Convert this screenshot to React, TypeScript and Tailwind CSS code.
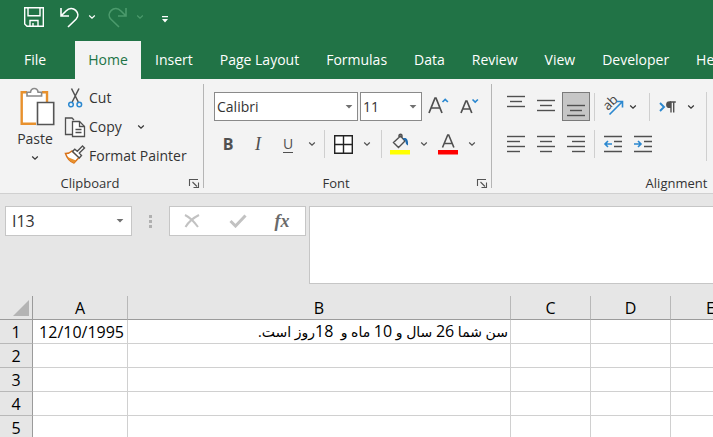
import type { ReactNode } from 'react';
import { clsx } from 'clsx';

const TABS = ['Insert', 'Page Layout', 'Formulas', 'Data', 'Review', 'View', 'Developer', 'Help'];

const COLUMNS = [
  { name: 'A', width: 'w-[95px]' },
  { name: 'B', width: 'w-[383px]' },
  { name: 'C', width: 'w-20' },
  { name: 'D', width: 'w-20' },
  { name: 'E', width: 'w-20' },
];

const ROWS = [1, 2, 3, 4, 5];

const CELLS: Record<string, { text: string; rtl?: boolean }> = {
  A1: { text: '12/10/1995' },
  B1: { text: 'سن شما 26 سال و 10 ماه و  18روز است.', rtl: true },
};

function Chevron({ className }: { className?: string }) {
  return (
    <svg viewBox="0 0 8 6" className={clsx('h-[6px] w-2 shrink-0', className)} fill="none" stroke="currentColor" strokeWidth="1.2">
      <path d="M1.200 1.500 4 4.200 6.800 1.500" />
    </svg>
  );
}

function Caret({ className }: { className?: string }) {
  return (
    <svg viewBox="0 0 8 4" className={clsx('h-1 w-2 shrink-0 text-[#707070]', className)} fill="currentColor">
      <path d="M.6 0h6.800L4 3.600z" />
    </svg>
  );
}

interface ToolButtonProps {
  label: string;
  className?: string;
  active?: boolean;
  children: ReactNode;
}

function ToolButton({ label, className, active, children }: ToolButtonProps) {
  return (
    <button
      type="button"
      aria-label={label}
      className={clsx(
        'flex shrink-0 items-center justify-center',
        active && 'border border-[#7a7a7a] bg-[#c6c6c6]',
        className,
      )}
    >
      {children}
    </button>
  );
}

function Divider() {
  return <div className="h-7 w-px shrink-0 bg-[#cfcfcf]" />;
}

function LinesIcon({ lines }: { lines: [number, number, number][] }) {
  return (
    <svg viewBox="0 0 20 28" className="h-7 w-5" stroke="#505050" strokeWidth="1.4">
      {lines.map(([x1, x2, y]) => (
        <path key={y} d={`M${x1} ${y}H${x2}`} />
      ))}
    </svg>
  );
}

function GroupFooter({ title, launcher }: { title: string; launcher?: boolean }) {
  return (
    <div className="flex h-5 items-center pr-[3px]">
      <span className={clsx('flex-1 text-center text-[13px] text-[#333]', launcher && 'pr-2')}>{title}</span>
      {launcher && (
        <button type="button" aria-label={`${title} settings`} className="h-3 w-3">
          <svg viewBox="0 0 12 12" className="h-3 w-3" fill="none" stroke="#555" strokeWidth="1.1">
            <path d="M1.500 9V2.500H10M4.500 5 9 9.500M10.500 5.500V10.500H5.500" />
          </svg>
        </button>
      )}
    </div>
  );
}

function TitleBar() {
  return (
    <div className="flex h-[41px] items-center pb-[7px] pl-6 text-white">
      <button type="button" aria-label="Save">
        <svg viewBox="0 0 20 20" className="h-5 w-5" fill="none" stroke="currentColor" strokeWidth="1.4">
          <path d="M.7.7h18.600v18.600H3L.7 17zM4 .7v8h12v-8M6 19v-5.500h8V19M9 19v-3" />
        </svg>
      </button>
      <button type="button" aria-label="Undo" className="ml-4 flex items-center gap-2">
        <svg viewBox="0 0 20 21" className="h-[21px] w-5" fill="none" stroke="currentColor" strokeWidth="1.6">
          <path d="M1 1v8h8M1.500 8.500 6 4C9 1 13 .8 15.700 3.300c2.800 2.700 2.800 6.300.3 9L8 20" />
        </svg>
        <Chevron />
      </button>
      <button type="button" aria-label="Redo" className="ml-3 flex items-center gap-2 text-[#4b9a6c]">
        <svg viewBox="0 0 20 21" className="h-[21px] w-5" fill="none" stroke="currentColor" strokeWidth="1.6">
          <path d="M18 1v8h-8M17.500 8.500 13 4C10 1 6 .8 3.300 3.300.5 6 .5 9.600 3 12.300L11 20" />
        </svg>
        <Chevron />
      </button>
      <button type="button" aria-label="Customize Quick Access Toolbar" className="mt-1 ml-[18px]">
        <svg viewBox="0 0 6 7" className="h-[7px] w-[6px]" fill="currentColor">
          <path d="M0 0h6v1.200H0zM0 3h6L3 6.500z" />
        </svg>
      </button>
    </div>
  );
}

function TabBar() {
  return (
    <nav className="flex h-[38px] overflow-hidden text-sm text-white">
      <a href="#file" className="flex w-[75px] shrink-0 items-center pl-6">File</a>
      <a href="#home" className="flex w-[66px] shrink-0 items-center justify-center bg-[#f3f3f3] text-[#217346]">Home</a>
      <div className="flex gap-[27px] pl-3.5">
        {TABS.map((tab) => (
          <a key={tab} href={`#${tab}`} className="flex shrink-0 items-center whitespace-nowrap">{tab}</a>
        ))}
      </div>
    </nav>
  );
}

function ClipboardGroup() {
  return (
    <section className="flex w-[203px] shrink-0 flex-col">
      <div className="flex flex-1 pl-[14px]">
        <button type="button" className="flex w-[42px] flex-col items-center gap-0.5 pt-2">
          <svg viewBox="0 0 36 40" className="ml-1 h-10 w-9" fill="none">
            <path d="M3 6.500h24.500V37H3z" fill="#fff" />
            <path d="M8 5.300H2.700v31.500H17M23 5.300h5V15" stroke="#e8912d" strokeWidth="2.400" />
            <path d="M8 9V5.300h3.500c.3-2.500 1.700-3.800 3.800-3.800s3.500 1.300 3.800 3.800h3.500V9z" fill="#fff" stroke="#8a8a8a" strokeWidth="1.600" />
            <path d="M18.500 15.500h16.200V37.500H18.500z" fill="#fff" stroke="#555" strokeWidth="1.600" />
          </svg>
          <span className="text-sm leading-5">Paste</span>
          <Chevron className="mt-1" />
        </button>
        <div className="ml-2 flex flex-col pt-1">
          <button type="button" className="flex h-[29px] items-center gap-[3px]">
            <svg viewBox="0 0 22 22" className="h-[22px] w-[22px]" fill="none">
              <path d="M7.500 1.500 14.300 15M15 1.500 8.200 15" stroke="#505050" strokeWidth="1.500" />
              <circle cx="7" cy="17.500" r="2.300" stroke="#2b88d0" strokeWidth="1.500" />
              <circle cx="15.300" cy="17.500" r="2.300" stroke="#2b88d0" strokeWidth="1.500" />
            </svg>
            Cut
          </button>
          <button type="button" className="flex h-[29px] items-center gap-[3px]">
            <svg viewBox="0 0 22 22" className="h-[22px] w-[22px]" fill="none" stroke="#505050" strokeWidth="1.300">
              <path d="M8 18.500H1.500V2H8l2 2" />
              <path d="M8.500 5.500h7l5 5v10h-12z" fill="#fff" />
              <path d="M15.500 5.500v5h5M11.500 13.500h6M11.500 16.500h6" />
            </svg>
            Copy
            <Chevron className="ml-3" />
          </button>
          <button type="button" className="flex h-[29px] items-center gap-[3px] whitespace-nowrap">
            <svg viewBox="0 0 22 22" className="h-[22px] w-[22px]" fill="none">
              <path d="M1.500 8.500c3 0 5-1 6.500-2.500l7 6.500L10 18C5.500 16.500 3 13 1.500 8.500z" fill="#fff" stroke="#d9731a" strokeWidth="1.500" />
              <path d="M3.500 12 12 15.500l-2 2.500c-3-1-5-3-6.500-6z" fill="#e8912d" />
              <path d="m8.500 6.500 2.300-2.300 2.500 2L18.500 1l2 2-5.200 5.100 2.200 2.400-2.200 2.500z" fill="#fff" stroke="#505050" strokeWidth="1.400" />
            </svg>
            Format Painter
          </button>
        </div>
      </div>
      <GroupFooter title="Clipboard" launcher />
    </section>
  );
}

function FontGroup() {
  return (
    <section className="flex w-[287px] shrink-0 flex-col">
      <div className="flex flex-1 flex-col gap-[9px] pt-[13px] pl-[10px]">
        <div className="flex h-[29px] items-center">
          <div className="relative flex h-full items-center">
            <select aria-label="Font" className="h-full w-36 appearance-none border border-[#8a8a8a] bg-white pl-0.5">
              <option>Calibri</option>
            </select>
            <Caret className="pointer-events-none absolute right-[5px]" />
          </div>
          <div className="relative ml-0.5 flex h-full items-center">
            <select aria-label="Font size" className="h-full w-[62px] appearance-none border border-[#8a8a8a] bg-white pl-0.5">
              <option>11</option>
            </select>
            <Caret className="pointer-events-none absolute right-[5px]" />
          </div>
          <ToolButton label="Increase font size" className="ml-0.5 h-7 w-7">
            <svg viewBox="0 0 22 22" className="h-[22px] w-[22px]" fill="none">
              <path d="M2 17 8 2h1l6 15M4.200 12H12.800" stroke="#505050" strokeWidth="1.700" />
              <path d="m15.500 6 2.700-2.500L20.900 6" stroke="#2b88d0" strokeWidth="1.700" />
            </svg>
          </ToolButton>
          <ToolButton label="Decrease font size" className="ml-1 h-7 w-7">
            <svg viewBox="0 0 22 22" className="h-[22px] w-[22px]" fill="none">
              <path d="M2 17 6.900 5h1L12.800 17M3.900 13h7" stroke="#505050" strokeWidth="1.700" />
              <path d="m13.500 3.500 2.700 2.500 2.700-2.500" stroke="#2b88d0" strokeWidth="1.700" />
            </svg>
          </ToolButton>
        </div>
        <div className="flex h-7 items-center text-[#505050]">
          <ToolButton label="Bold" className="h-7 w-7"><span className="text-base font-bold">B</span></ToolButton>
          <ToolButton label="Italic" className="ml-0.5 h-7 w-7"><span className="font-['Liberation_Serif'] text-lg italic">I</span></ToolButton>
          <ToolButton label="Underline" className="ml-0.5 h-7 w-7"><span className="border-b border-[#505050] text-sm leading-4">U</span></ToolButton>
          <ToolButton label="Underline options" className="ml-0.5 h-7 w-4"><Chevron /></ToolButton>
          <div className="ml-1"><Divider /></div>
          <ToolButton label="Borders" className="ml-1 h-7 w-7">
            <svg viewBox="0 0 19 19" className="h-[19px] w-[19px]" fill="#fff" stroke="#222" strokeWidth="1.400">
              <path d="M.7.7h17.600v17.600H.7zM9.500.7v17.600M.7 9.500h17.600" />
            </svg>
          </ToolButton>
          <ToolButton label="Border options" className="ml-0.5 h-7 w-4"><Chevron /></ToolButton>
          <div className="ml-1.5"><Divider /></div>
          <ToolButton label="Fill color" className="ml-1 h-7 w-7">
            <svg viewBox="0 0 20 22" className="h-[22px] w-5" fill="none">
              <path d="M0 17h20v4.500H0z" fill="#ff0" />
              <path d="m3.500 9.500 7-6.500 4.500 5-6.500 6.500zM9 4.500V2.500c0-1.700 3-1.700 3 0V5" stroke="#505050" strokeWidth="1.400" />
              <path d="M12.500 5.500c4-1.500 6 1 5.500 7-2-.5-2.500-2.500-2.500-4.500z" fill="#1e6bb0" />
            </svg>
          </ToolButton>
          <ToolButton label="Fill color options" className="ml-0.5 h-7 w-4"><Chevron /></ToolButton>
          <ToolButton label="Font color" className="ml-0.5 h-7 w-7">
            <svg viewBox="0 0 20 22" className="h-[22px] w-5" fill="none">
              <path d="M0 17h20v4.500H0z" fill="red" />
              <path d="M4.500 14.500 9.700 2h1l5.200 12.500M6.500 10.500h7.400" stroke="#505050" strokeWidth="1.600" />
            </svg>
          </ToolButton>
          <ToolButton label="Font color options" className="ml-0.5 h-7 w-4"><Chevron /></ToolButton>
        </div>
      </div>
      <GroupFooter title="Font" launcher />
    </section>
  );
}

function AlignmentGroup() {
  return (
    <section className="flex w-[372px] shrink-0 flex-col">
      <div className="flex flex-1 pt-[13px] pl-[10px]">
        <div className="flex flex-col gap-[9px]">
          <div className="flex h-[29px] items-center gap-0.5">
            <ToolButton label="Top align" className="h-[29px] w-7">
              <LinesIcon lines={[[1, 19, 3.500], [4, 16, 8.500], [1, 19, 13.500]]} />
            </ToolButton>
            <ToolButton label="Middle align" className="h-[29px] w-7">
              <LinesIcon lines={[[1, 19, 7.500], [4, 16, 12.500], [1, 19, 17.500]]} />
            </ToolButton>
            <ToolButton label="Bottom align" active className="h-[29px] w-7">
              <LinesIcon lines={[[1, 19, 12.500], [4, 16, 17.500], [1, 19, 22.500]]} />
            </ToolButton>
            <div className="ml-0.5"><Divider /></div>
            <ToolButton label="Orientation" className="ml-0.5 h-7 w-7">
              <svg viewBox="0 0 28 28" className="h-7 w-7" fill="none">
                <text transform="translate(9 18) rotate(-45)" fontSize="13" fill="#444">ab</text>
                <path d="M10.500 21.500 23 9M17.500 8.500h6v6" stroke="#2b88d0" strokeWidth="1.600" />
              </svg>
            </ToolButton>
            <ToolButton label="Orientation options" className="h-7 w-2"><Chevron /></ToolButton>
            <div className="ml-2.5"><Divider /></div>
            <ToolButton label="Text direction" className="ml-0.5 h-7 w-7">
              <svg viewBox="0 0 20 20" className="h-5 w-5" fill="none">
                <path d="m2 6 4 4-4 4" stroke="#2b88d0" strokeWidth="1.900" />
                <path d="M13 5v10.500M15.700 5v10.500M17.800 5H12" stroke="#505050" strokeWidth="1.400" />
                <path d="M13 4.300h-1.500a3.400 3.400 0 0 0 0 6.800H13z" fill="#505050" />
              </svg>
            </ToolButton>
            <ToolButton label="Text direction options" className="h-7 w-3.5"><Chevron /></ToolButton>
          </div>
          <div className="flex h-7 items-center gap-0.5">
            <ToolButton label="Align left" className="h-7 w-7">
              <LinesIcon lines={[[1, 19, 6.500], [1, 14, 11.500], [1, 19, 16.500], [1, 14, 21.500]]} />
            </ToolButton>
            <ToolButton label="Center" className="h-7 w-7">
              <LinesIcon lines={[[1, 19, 6.500], [4, 16, 11.500], [1, 19, 16.500], [4, 16, 21.500]]} />
            </ToolButton>
            <ToolButton label="Align right" className="h-7 w-7">
              <LinesIcon lines={[[1, 19, 6.500], [6, 19, 11.500], [1, 19, 16.500], [6, 19, 21.500]]} />
            </ToolButton>
            <div className="ml-0.5"><Divider /></div>
            <ToolButton label="Decrease indent" className="ml-0.5 h-7 w-7">
              <svg viewBox="0 0 20 28" className="h-7 w-5" fill="none" stroke="#505050" strokeWidth="1.400">
                <path d="M1 6.500h18M11 11.500h8M11 16.500h8M1 21.500h18" />
                <path d="M9 14H2M5 11l-3 3 3 3" stroke="#2b88d0" strokeWidth="1.600" />
              </svg>
            </ToolButton>
            <ToolButton label="Increase indent" className="h-7 w-7">
              <svg viewBox="0 0 20 28" className="h-7 w-5" fill="none" stroke="#505050" strokeWidth="1.400">
                <path d="M1 6.500h18M11 11.500h8M11 16.500h8M1 21.500h18" />
                <path d="M1 14h7M5 11l3 3-3 3" stroke="#2b88d0" strokeWidth="1.600" />
              </svg>
            </ToolButton>
          </div>
        </div>
        <div className="ml-2 h-[69px] w-px bg-[#cfcfcf]" />
      </div>
      <GroupFooter title="Alignment" />
    </section>
  );
}

function FormulaBar() {
  return (
    <div className="flex items-start bg-[#e6e6e6] py-3 pl-[5px]">
      <div className="relative flex h-[30px] w-[127px] shrink-0 items-center">
        <input aria-label="Name box" defaultValue="I13" className="h-full w-full border border-[#c6c6c6] bg-white pl-1.5 text-base" />
        <Caret className="pointer-events-none absolute right-2" />
      </div>
      <div className="flex h-[30px] w-[37px] shrink-0 flex-col items-center justify-center gap-0.5">
        <i className="h-[3px] w-[3px] bg-[#b0b0b0]" />
        <i className="h-[3px] w-[3px] bg-[#b0b0b0]" />
        <i className="h-[3px] w-[3px] bg-[#b0b0b0]" />
      </div>
      <div className="flex h-[30px] w-[137px] shrink-0 items-center border border-[#c6c6c6] bg-white">
        <ToolButton label="Cancel" className="h-7 w-11">
          <svg viewBox="0 0 16 14" className="h-3.5 w-4" fill="none" stroke="#c2c2c2" strokeWidth="2">
            <path d="M1 1c5 2.500 9 6.500 13 12M15 1C9 4 4.500 8 1.500 13" />
          </svg>
        </ToolButton>
        <ToolButton label="Enter" className="h-7 w-12">
          <svg viewBox="0 0 18 14" className="h-3.5 w-[18px]" fill="none" stroke="#c2c2c2" strokeWidth="3">
            <path d="m1.500 7 5 5L16.500 1.500" />
          </svg>
        </ToolButton>
        <ToolButton label="Insert function" className="h-7 w-10">
          <span className="font-['Liberation_Serif'] text-lg leading-5 font-bold text-[#6a6a6a] italic">fx</span>
        </ToolButton>
      </div>
      <textarea aria-label="Formula" className="ml-[3px] h-[78px] min-w-0 flex-1 resize-none border border-r-0 border-[#c6c6c6] bg-white" />
    </div>
  );
}

function RtlText({ text }: { text: string }) {
  return (
    <span className="text-sm">
      {text.split(/(\d+)/).map((part, i) => (
        <span key={i} className={/^\d/.test(part) ? 'text-base leading-5' : undefined}>{part}</span>
      ))}
    </span>
  );
}

function Sheet() {
  return (
    <div className="flex-1 overflow-hidden bg-white">
      <table className="w-[751px] table-fixed border-separate border-spacing-0 text-base leading-5 text-black">
        <thead>
          <tr className="h-6 bg-[#e6e6e6]">
            <th className="w-[33px] border-r border-b border-[#9b9b9b] p-0" aria-label="Select all">
              <svg viewBox="0 0 16 16" className="ml-[13px] h-4 w-4" fill="#b4b4b4">
                <path d="M16 0v16H0z" />
              </svg>
            </th>
            {COLUMNS.map(({ name, width }) => (
              <th key={name} scope="col" className={clsx('border-r border-b border-r-[#b8b8b8] border-b-[#9b9b9b] p-0 font-normal', width)}>
                {name}
              </th>
            ))}
          </tr>
        </thead>
        <tbody>
          {ROWS.map((row) => (
            <tr key={row} className="h-6">
              <th scope="row" className="border-r border-b border-r-[#9b9b9b] border-b-[#b8b8b8] bg-[#e6e6e6] p-0 font-normal">{row}</th>
              {COLUMNS.map(({ name }) => {
                const cell = CELLS[name + row];
                return (
                  <td
                    key={name}
                    dir={cell?.rtl ? 'rtl' : undefined}
                    className={clsx('border-r border-b border-[#d0d0d0] px-[3px] py-0 whitespace-pre', cell?.rtl ? 'text-start' : 'text-right')}
                  >
                    {cell?.rtl ? <RtlText text={cell.text} /> : cell?.text}
                  </td>
                );
              })}
            </tr>
          ))}
        </tbody>
      </table>
    </div>
  );
}

export default function App() {
  return (
    <div className="flex h-screen flex-col overflow-hidden bg-[#e6e6e6] font-['Open_Sans','DejaVu_Sans',sans-serif] text-sm text-[#333]">
      <header className="shrink-0 bg-[#217346]">
        <TitleBar />
        <TabBar />
      </header>
      <div className="flex h-[115px] shrink-0 overflow-hidden border-b border-[#d0d0d0] bg-[#f3f3f3]">
        <ClipboardGroup />
        <div className="mt-[5px] h-[104px] w-px shrink-0 bg-[#b5b5b5]" />
        <FontGroup />
        <div className="mt-[5px] h-[104px] w-px shrink-0 bg-[#b5b5b5]" />
        <AlignmentGroup />
      </div>
      <FormulaBar />
      <Sheet />
    </div>
  );
}
